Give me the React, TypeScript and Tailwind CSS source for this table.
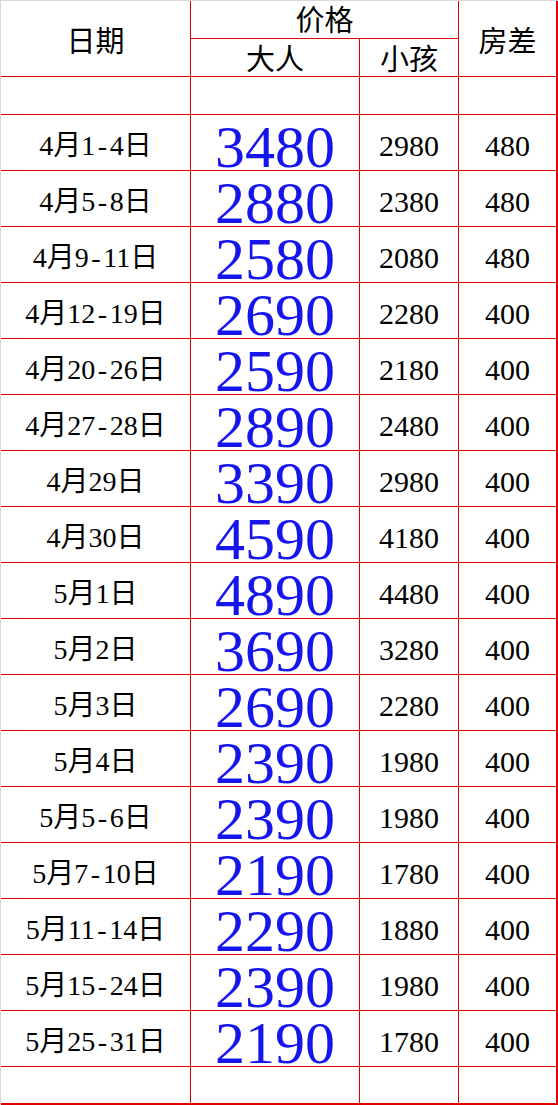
const rows: [string, string, string, string][] = [
  ['4月1-4日', '3480', '2980', '480'],
  ['4月5-8日', '2880', '2380', '480'],
  ['4月9-11日', '2580', '2080', '480'],
  ['4月12-19日', '2690', '2280', '400'],
  ['4月20-26日', '2590', '2180', '400'],
  ['4月27-28日', '2890', '2480', '400'],
  ['4月29日', '3390', '2980', '400'],
  ['4月30日', '4590', '4180', '400'],
  ['5月1日', '4890', '4480', '400'],
  ['5月2日', '3690', '3280', '400'],
  ['5月3日', '2690', '2280', '400'],
  ['5月4日', '2390', '1980', '400'],
  ['5月5-6日', '2390', '1980', '400'],
  ['5月7-10日', '2190', '1780', '400'],
  ['5月11-14日', '2290', '1880', '400'],
  ['5月15-24日', '2390', '1980', '400'],
  ['5月25-31日', '2190', '1780', '400'],
];

const cell = 'bg-white flex items-center justify-center';
const font = { fontFamily: '"Liberation Serif", "Noto Sans CJK SC", serif' };

// the sheet's hyphen is half an em wide, a bit wider than Times'
function DateText({ text }: { text: string }) {
  const parts = text.split('-');
  if (parts.length < 2) return <>{text}</>;
  return (
    <>
      {parts[0]}
      <span className="px-[2.5px]">-</span>
      {parts[1]}
    </>
  );
}

export default function App() {
  return (
    <div className="w-[558px] h-[1105px] bg-white overflow-hidden border-t border-l border-[#d8d8d8]" style={font}>
      <div className="grid grid-cols-[189px_168px_98px_97px] grid-rows-[37px_37px_37px_repeat(17,55px)_36px] gap-px bg-[#e00000] pr-[2px] pb-[2px] text-black">
        <div className={`${cell} row-span-2 text-[29px] pt-[8px]`}>日期</div>
        <div className={`${cell} col-span-2 text-[29px] leading-none pt-[3px]`}>价格</div>
        <div className={`${cell} row-span-2 text-[29px] pt-[8px]`}>房差</div>
        <div className={`${cell} text-[29px] leading-none pt-[6px]`}>大人</div>
        <div className={`${cell} text-[29px] leading-none pt-[6px]`}>小孩</div>

        <div className={cell}></div>
        <div className={cell}></div>
        <div className={cell}></div>
        <div className={cell}></div>

        {rows.map(([date, adult, child, diff]) => [
          <div key={date + 'd'} className={`${cell} text-[28px] pt-[6px]`}>
            <DateText text={date} />
          </div>,
          <div key={date + 'a'} className="bg-white flex justify-center items-start pt-[10px] text-[60px] leading-[44px] text-[#1515ec]">
            {adult}
          </div>,
          <div key={date + 'c'} className={`${cell} text-[30px] pt-[6px]`}>{child}</div>,
          <div key={date + 'f'} className={`${cell} text-[30px] pt-[6px]`}>{diff}</div>,
        ])}

        <div className={cell}></div>
        <div className={cell}></div>
        <div className={cell}></div>
        <div className={cell}></div>
      </div>
    </div>
  );
}
